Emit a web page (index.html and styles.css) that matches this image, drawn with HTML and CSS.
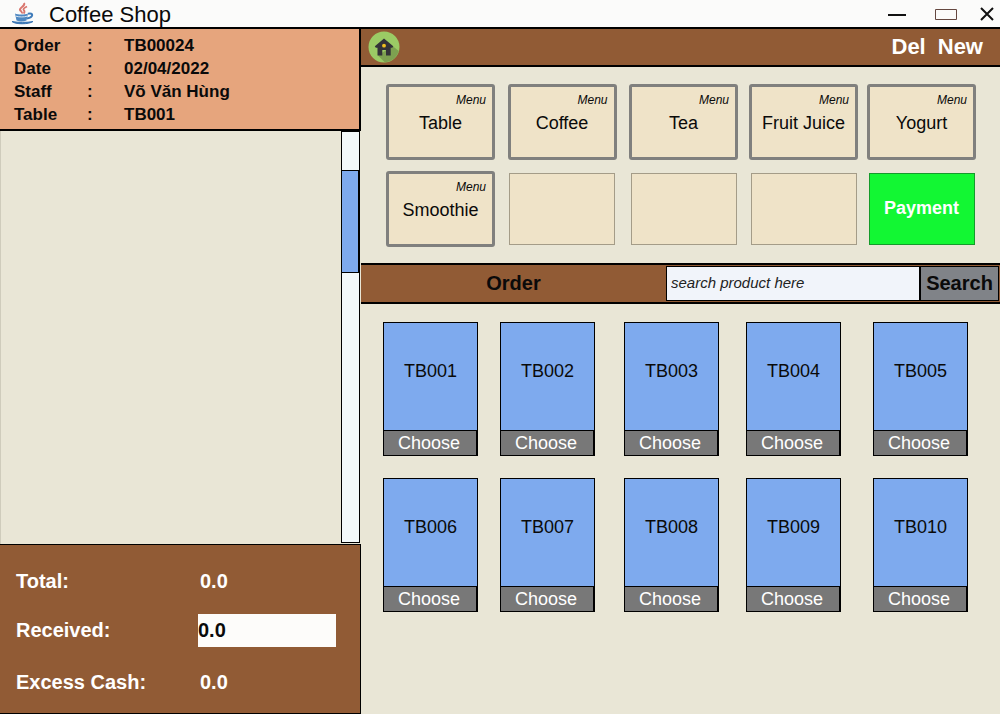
FILE: index.html
```html
<!DOCTYPE html>
<html lang="en">
<head>
<meta charset="utf-8">
<title>Coffee Shop</title>
<link rel="stylesheet" href="styles.css">
</head>
<body>
<div class="window">
  <header class="titlebar">
    <svg class="java-logo" width="24" height="24" viewBox="0 0 24 24" fill="none" aria-hidden="true">
      <path d="M13 1c2 3-5 4.500-4 7 1 1.200 2.500 2 2 3.500" stroke="#d9776f" stroke-width="2"/>
      <path d="M16 4.500c-3 1.500-4.500 2.500-3 4 1 1 .5 2-.5 3" stroke="#d9776f" stroke-width="1.800"/>
      <path d="M4 11.500c3 1.300 10 1.300 13 0l-1.500 7c-3 1.200-7 1.200-10 0z" fill="#4f88c2"/>
      <path d="M5 14.200c3.500 1 8 1 11 0" stroke="#d6e4f1"/>
      <path d="M17 11.800c6-1.500 5.500 3.500-1 4.700" stroke="#3f7cba" stroke-width="2"/>
      <path d="M1 19.500c3 3 17 3 21 0-6 1.200-15 1.200-21 0z" fill="#3572b3" stroke="#3572b3"/>
    </svg>
    <h1 class="app-name">Coffee Shop</h1>
    <button class="win-btn" aria-label="Minimize"><svg width="20" height="14"><path d="M1 8h18" stroke="#111" stroke-width="2"/></svg></button>
    <button class="win-btn" aria-label="Maximize"><svg width="22" height="14" fill="none"><path d="M.5 2.500h21v10h-21z" stroke="#654840"/></svg></button>
    <button class="win-btn" aria-label="Close"><svg width="14" height="14"><path d="M1 1l12 12M13 1L1 13" stroke="#111" stroke-width="2"/></svg></button>
  </header>

  <aside class="bill">
    <dl class="info">
      <dt>Order</dt><dd>:</dd><dd>TB00024</dd>
      <dt>Date</dt><dd>:</dd><dd>02/04/2022</dd>
      <dt>Staff</dt><dd>:</dd><dd>Võ Văn Hùng</dd>
      <dt>Table</dt><dd>:</dd><dd>TB001</dd>
    </dl>
    <div class="items">
      <div class="scroll-track"><div class="scroll-thumb"></div></div>
    </div>
    <form class="totals">
      <label for="total">Total:</label><output id="total">0.0</output>
      <label for="received">Received:</label><input id="received" class="received" type="text" value="0.0">
      <label for="excess">Excess Cash:</label><output id="excess">0.0</output>
    </form>
  </aside>

  <main class="main">
    <nav class="toolbar">
      <button class="home" aria-label="Home">
        <svg width="32" height="32" viewBox="0 0 32 32" aria-hidden="true">
          <circle cx="16" cy="16" r="15.500" fill="#9bcb65"/>
          <path d="M24.500 15l6.400 5A15.500 15.500 0 0 1 17 31.400L10 24.500z" fill="#7da150"/>
          <path d="M16 7.500l9.300 7.800-1 1.400H22.700V24.500H18v-5.500h-3.700v5.500H9.500v-7.800H7.800l-1-1.400z" fill="#333338"/>
          <circle cx="16" cy="14.700" r="1.900" fill="#f0c020"/>
        </svg>
      </button>
      <button class="tool">Del</button>
      <button class="tool">New</button>
    </nav>

    <section class="menus">
      <button class="menu"><i class="tag">Menu</i>Table</button>
      <button class="menu"><i class="tag">Menu</i>Coffee</button>
      <button class="menu"><i class="tag">Menu</i>Tea</button>
      <button class="menu"><i class="tag">Menu</i>Fruit Juice</button>
      <button class="menu"><i class="tag">Menu</i>Yogurt</button>
      <button class="menu"><i class="tag">Menu</i>Smoothie</button>
      <div class="slot"></div>
      <div class="slot"></div>
      <div class="slot"></div>
      <button class="slot payment">Payment</button>
    </section>

    <form class="order-bar">
      <h2 class="order-title">Order</h2>
      <input class="search-input" type="text" placeholder="search product here" aria-label="Search product">
      <button class="search-btn" type="button">Search</button>
    </form>

    <section class="tables">
      <article class="card"><p class="code">TB001</p><button class="choose">Choose</button></article>
      <article class="card"><p class="code">TB002</p><button class="choose">Choose</button></article>
      <article class="card"><p class="code">TB003</p><button class="choose">Choose</button></article>
      <article class="card"><p class="code">TB004</p><button class="choose">Choose</button></article>
      <article class="card"><p class="code">TB005</p><button class="choose">Choose</button></article>
      <article class="card"><p class="code">TB006</p><button class="choose">Choose</button></article>
      <article class="card"><p class="code">TB007</p><button class="choose">Choose</button></article>
      <article class="card"><p class="code">TB008</p><button class="choose">Choose</button></article>
      <article class="card"><p class="code">TB009</p><button class="choose">Choose</button></article>
      <article class="card"><p class="code">TB010</p><button class="choose">Choose</button></article>
    </section>
  </main>
</div>
</body>
</html>
```
FILE: styles.css
```css
* { box-sizing: border-box; margin: 0; }

body, button, input {
  font-family: "Liberation Sans", Arial, sans-serif;
  color: #0a0a0a;
}

button { border: 0; padding: 0; background: none; border-radius: 0; }

.window {
  min-height: 100vh;
  display: grid;
  grid-template-columns: minmax(0, 361fr) minmax(0, 639fr);
  grid-template-rows: auto 1fr;
  background: #e9e6d6;
}

/* Title bar */
.titlebar {
  grid-column: 1 / -1;
  display: flex;
  align-items: center;
  height: 29px;
  padding: 0 6px 0 11px;
  background: #fbfbfa;
  border-bottom: 2px solid #000;
}
.app-name {
  flex: 1;
  margin-left: 14px;
  padding-top: 3px;
  font-size: 22px;
  line-height: 24px;
  font-weight: 400;
}
.win-btn { display: flex; }
.win-btn + .win-btn { margin-left: 28px; }
.win-btn:last-child { margin-left: 23px; }

/* Bill column */
.bill { display: flex; flex-direction: column; }
.info {
  display: grid;
  grid-template-columns: 73px 37px 1fr;
  padding: 5px 0 3px 14px;
  background: #e6a57d;
  border-right: 2px solid #000;
  border-bottom: 2px solid #000;
  font-size: 17px;
  line-height: 23px;
  font-weight: 700;
}
.items {
  flex: 1;
  display: flex;
  justify-content: flex-end;
  padding-right: 1px;
  border-left: 1px solid #cfccbc;
}
.scroll-track {
  width: 19px;
  margin-bottom: 1px;
  padding-top: 38px;
  background: #f3f9fa;
  border: 1px solid #000;
}
.scroll-thumb {
  height: 103px;
  background: #7eaaee;
  border: 1px solid #000;
  border-width: 1px 1px 1px 0;
}
.totals {
  display: grid;
  grid-template-columns: 182px 1fr;
  grid-template-rows: 48px 50px 55px;
  align-items: center;
  padding: 12px 24px 3px 16px;
  background: #915b35;
  border: solid #000;
  border-width: 1px 1px 1px 0;
  color: #fff;
  font-size: 20px;
  font-weight: 700;
}
.totals output { padding-left: 2px; }
.received {
  width: 100%;
  height: 33px;
  padding: 0;
  border: 0;
  background: #fdfcfa;
  font-size: 20px;
  font-weight: 700;
}

/* Main column */
.main { display: flex; flex-direction: column; }
.toolbar {
  display: flex;
  align-items: center;
  gap: 12px;
  height: 38px;
  padding: 0 17px 0 7px;
  background: #915b35;
  border-bottom: 2px solid #000;
}
.home { display: flex; margin-right: auto; }
.tool { color: #fff; font-size: 22px; font-weight: 700; }

.menus {
  display: grid;
  grid-template-columns: 121fr 122fr 121fr 119fr 117fr;
  row-gap: 11px;
  justify-items: center;
  align-items: center;
  padding: 17px 20px 16px 19px;
}
.menu {
  display: flex;
  flex-direction: column;
  align-items: center;
  width: 109px;
  height: 76px;
  padding-top: 5px;
  background: #efe3c8;
  border: 3px solid #80807e;
  border-radius: 3px;
  font-size: 18px;
  line-height: 22px;
}
.tag {
  align-self: flex-end;
  margin: 0 6px 4px 0;
  font-size: 12px;
  line-height: 16px;
}
.slot {
  width: 106px;
  height: 72px;
  background: #efe3c8;
  border: 1px solid #a49c88;
}
.payment {
  padding-bottom: 2px;
  background: #12f733;
  border-color: #159a2b;
  color: #fff;
  font-size: 18px;
  font-weight: 700;
}

.order-bar {
  display: grid;
  grid-template-columns: 305fr 254fr 79fr;
  height: 41px;
  padding: 1px 1px 1px 0;
  background: #915b35;
  border: solid #000;
  border-width: 2px 0;
}
.order-title {
  text-align: center;
  font-size: 20px;
  line-height: 35px;
}
.search-input {
  min-width: 0;
  padding: 0 4px 2px;
  background: #f1f4fa;
  border: 1px solid #000;
  border-radius: 0;
  font-size: 15px;
  font-style: italic;
}
.search-input::placeholder { color: #222; opacity: 1; }
.search-btn {
  background: #808388;
  border: 1px solid #000;
  font-size: 20px;
  font-weight: 700;
}

/* Table cards */
.tables {
  display: grid;
  grid-template-columns: 117fr 117fr 131fr 113fr 141fr;
  row-gap: 22px;
  justify-items: center;
  padding: 18px 9px 18px 11px;
}
.card {
  width: 95px;
  background: #7eaaee;
  border: 1px solid #000;
  font-size: 18px;
}
.code {
  padding: 37px 0 48px;
  line-height: 22px;
  text-align: center;
}
.choose {
  display: block;
  width: 100%;
  height: 25px;
  padding-right: 2px;
  background: #787878;
  border: solid #000;
  border-width: 1px 1px 0 0;
  color: #fff;
  font-size: 18px;
  line-height: 22px;
}
```
